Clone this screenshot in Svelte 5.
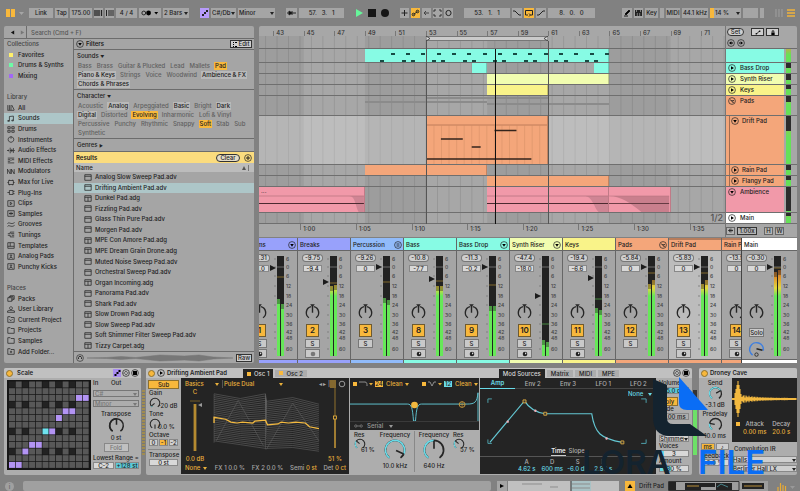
<script>
  let search = $state('');
  let activeTab = $state('Amp');

  const collections = [
    { name: 'Favorites', color: '#fff06a' },
    { name: 'Drums & Synths', color: '#6dfaa6' },
    { name: 'Mixing', color: '#a167f5' }
  ];

  // icon paths are drawn on a 10 x 8 grid
  const library = [
    { name: 'All', icon: 'M1 1V7M3 1V7M5 1V7M6 1L9 7M0.5 7.5H9' },
    { name: 'Sounds', icon: 'M3 6.5V1.5L8 1V6M1 6.5H3V7.5H1ZM6 6H8V7H6Z', active: true },
    { name: 'Drums', icon: 'M1 0.5H4V3H1ZM6 0.5H9V3H6ZM1 5H4V7.5H1ZM6 5H9V7.5H6Z' },
    { name: 'Instruments', icon: 'M5 0.5A3.5 3.5 0 1 1 4.9 0.5M5 0.5V3' },
    { name: 'Audio Effects', icon: 'M0 4H2M2 3V5M4 0.5V7.5M6 2V6M8 1V7M9 4H10M4 4H8' },
    { name: 'MIDI Effects', icon: 'M1 1H9M1 3H4L5 4L6 3H9M1 7H9M1 5H4' },
    { name: 'Modulators', icon: 'M0.5 7V1L4 7V1M5.5 7V1L9 7V1' },
    { name: 'Max for Live', icon: 'M2 1.5H8V6.5H2ZM0.5 4H2M8 4H9.5M3 0.5V1.5M7 0.5V1.5M3 6.5V7.5M7 6.5V7.5' },
    { name: 'Plug-Ins', icon: 'M3 1.5H7.5V6.5H3ZM0.5 4H3M7.5 2.5H9.5M7.5 5.5H9.5' },
    { name: 'Clips', icon: 'M1 0.5H9V7.5H1ZM4 2.5V5.5L6.5 4Z' },
    { name: 'Samples', icon: 'M1 0.5H9V7.5H1ZM2.5 4H7.5M3.5 3V5M5 2V6M6.5 3V5' },
    { name: 'Grooves', icon: 'M0.5 3C2.5 0 5 5 9.5 1.5M0.5 6.5C2.5 3.5 5 8.5 9.5 5' },
    { name: 'Tunings', icon: 'M4 1H9M1 3H4V1M1 5H4V7H9M5 3H9M6 5H9' },
    { name: 'Templates', icon: 'M1 0.5H9V7.5H1ZM1 5H9M4 0.5V5' },
    { name: 'Analog Pads', icon: 'M1 0.5H9V7.5H1ZM5 2A1 1 0 1 1 4.9 2M3 6.5C3 4.5 7 4.5 7 6.5' },
    { name: 'Punchy Kicks', icon: 'M1 0.5H9V7.5H1ZM5 2A1 1 0 1 1 4.9 2M3 6.5C3 4.5 7 4.5 7 6.5' }
  ];

  const places = [
    { name: 'Packs', icon: 'M1 3H6V7.5H1ZM2.5 3V1.7H7.5V6H6M4 1.7V0.5H9V5H7.5' },
    { name: 'User Library', icon: 'M5 0.5A1.8 1.8 0 1 1 4.9 0.5M0.5 7.5H9.5V6L6.5 5H3.5L0.5 6Z' },
    { name: 'Current Project', icon: 'M1 7.5V0.5H4L5 1.5H9V7.5ZM3 4L5 5.5L7 3.5' },
    { name: 'Projects', icon: 'M1 7.5V0.5H4L5 1.5H9V7.5Z' },
    { name: 'Samples', icon: 'M1 7.5V0.5H4L5 1.5H9V7.5Z' },
    { name: 'Add Folder...', icon: 'M1 7.5V0.5H4L5 1.5H9V7.5ZM5 3V6M3.5 4.5H6.5' }
  ];

  // tag state: '' = off, 'on' = available, 'hot' = selected
  const soundTags = [
    [['Bass'], ['Brass'], ['Guitar & Plucked'], ['Lead'], ['Mallets'], ['Pad', 'hot']],
    [['Piano & Keys', 'on'], ['Strings'], ['Voice'], ['Woodwind'], ['Ambience & FX', 'on']],
    [['Chords & Phrases', 'on']]
  ];
  const characterTags = [
    [['Acoustic'], ['Analog', 'on'], ['Arpeggiated'], ['Basic', 'on'], ['Bright'], ['Dark', 'on']],
    [['Digital', 'on'], ['Distorted'], ['Evolving', 'hot'], ['Inharmonic'], ['Lofi & Vinyl']],
    [['Percussive'], ['Punchy'], ['Rhythmic'], ['Snappy'], ['Soft', 'hot'], ['Stab'], ['Sub']],
    [['Synthetic']]
  ];

  const results = [
    'Analog Slow Sweep Pad.adv', 'Drifting Ambient Pad.adv', 'Dunkel Pad.adg', 'Fizzling Pad.adv',
    'Glass Thin Pure Pad.adv', 'Morgen Pad.adv', 'MPE Con Amore Pad.adg', 'MPE Dream Grain Drone.adg',
    'Muted Noise Sweep Pad.adv', 'Orchestral Sweep Pad.adv', 'Organ Incoming.adg', 'Panorama Pad.adv',
    'Shark Pad.adv', 'Slow Drown Pad.adg', 'Slow Sweep Pad.adv', 'Soft Shimmer Filter Sweep Pad.adv',
    'Tizzy Carpet.adg'
  ];

  // arrangement view range, in bars
  const firstBar = 42.07;
  const barCount = 30.49;
  const pos = (bar) => ((bar - firstBar) / barCount) * 100;
  const span = (bars) => (bars / barCount) * 100;

  const barLabels = Array.from({ length: 15 }, (_, i) => 43 + i * 2);
  const times = ['1:00', '1:05', '1:10', '1:15', '1:20', '1:25', '1:30', '1:35'];
  const shaded = [[42, 45], [49, 53], [57, 61], [65, 69]];
  const gridLines = Array.from({ length: 41 }, (_, i) => 42.5 + i * 0.75);

  const hits = [
    ...Array.from({ length: 15 }, (_, i) => [50.7 + i, 28]),
    ...Array.from({ length: 8 }, (_, i) => [50 + i * 2, 84]),
    ...Array.from({ length: 7 }, (_, i) => [51.4 + i * 2, 84])
  ].filter(([b]) => b < 65);

  const teal = '#87fbe4';
  const orange = '#f4a67a';
  const lime = '#f1fdb0';
  const yellow = '#f9f389';
  const pink = '#f199a9';

  const lanes = [
    { name: '', size: 'drums', color: teal, clips: [[49, 65]], meter: 0 },
    { name: 'Bass Drop', size: 'small', color: teal, clips: [[56, 57], [64, 65]], icon: 'play', meter: 50 },
    { name: 'Synth Riser', size: 'small', color: lime, clips: [[57, 65]], icon: 'play', meter: 60 },
    { name: 'Keys', size: 'small', color: yellow, clips: [[57, 61]], icon: 'play', meter: 40 },
    { name: 'Pads', size: 'bus', color: orange, clips: [], icon: 'group', meter: 30 },
    { name: 'Drift Pad', size: 'tall', color: orange, clips: [[53, 61]], icon: 'down', nested: true, meter: 32 },
    { name: 'Rain Pad', size: 'small', color: orange, clips: [[49, 57]], icon: 'play', nested: true, meter: 50 },
    { name: 'Flangy Pad', size: 'small', color: orange, clips: [[57, 65]], icon: 'play', nested: true, meter: 40 },
    { name: 'Ambience', size: 'audio', color: pink, clips: [[42.07, 49], [57, 65], [65, 69]], icon: 'down', meter: 95 },
    { name: 'Main', size: 'small', color: '#ffffff', clips: [], icon: 'play', meter: 30 }
  ];

  const scaleMarks = [
    ['6', 3], ['0', 11], ['6', 20], ['12', 30], ['18', 40], ['24', 49],
    ['30', 59], ['36', 68], ['42', 76], ['48', 82], ['60', 93]
  ];

  // levels and fader are measured from the top of the 100px meter
  const strips = [
    { name: 'Drums', color: '#98a1fb', icon: 'down', peak: '-9.31', vol: '-1.0', num: 1, fader: 12, levels: [43, 48], hold: 21, arm: 'note' },
    { name: 'Breaks', color: '#98a1fb', peak: '-9.75', vol: '-9.4', num: 2, fader: 26, levels: [30, 29], hold: 27, arm: 'dot' },
    { name: 'Percussion', color: '#91bbfa', icon: 'lines', peak: '-9.26', vol: '0', num: 3, fader: 11, levels: [42, 44], hold: 26 },
    { name: 'Bass', color: teal, peak: '-10.8', vol: '-7.7', num: 8, fader: 23, levels: [30, 30], hold: 25, arm: 'note' },
    { name: 'Bass Drop', color: teal, icon: 'down', peak: '-11.3', vol: '-0.2', num: 9, fader: 11, levels: [50, 50], hold: 29, arm: 'note' },
    { name: 'Synth Riser', color: lime, icon: 'down', peak: '-47.4', vol: '-18.0', num: 10, fader: 40, levels: [84, 86], hold: 68, arm: 'note' },
    { name: 'Keys', color: yellow, peak: '-19.4', vol: '-6.6', num: 11, fader: 22, levels: [52, 54], hold: 43, arm: 'note' },
    { name: 'Pads', color: orange, icon: 'group', peak: '-5.84', vol: '0', num: 12, fader: 11, levels: [28, 24], hold: 17 },
    { name: 'Drift Pad', color: orange, nested: true, selected: true, peak: '-5.83', vol: '0', num: 13, fader: 11, levels: [28, 24], hold: 17, arm: 'note' },
    { name: 'Rain Pad', color: orange, nested: true, peak: '-13.9', vol: '0', num: 14, fader: 11, levels: [38, 36], hold: 28, arm: 'note' }
  ];
  const main = { name: 'Main', color: '#ffffff', peak: '-0.30', vol: '0', fader: 11, levels: [16, 14], hold: 12, isMain: true };

  const cells = Array.from({ length: 13 * 12 }, (_, i) => ({ row: Math.floor(i / 12), col: i % 12 }));
  const violetCells = ['2-10', '2-11', '4-8', '4-9', '5-7', '7-6', '9-3', '9-4', '10-2', '12-0', '12-1'];
  function cellColor({ row, col }) {
    const key = `${row}-${col}`;
    if (key === '7-5') return '#6fe3ef';
    if (violetCells.includes(key)) return '#b394f4';
    return [0, 3, 7, 10].includes(row) && [0, 2, 5, 7, 9].includes(col) ? '#222' : '#585858';
  }

  const waves = Array.from({ length: 26 }, (_, i) => {
    const y = 3 + i * 2;
    const t = i / 25;
    return `M1 ${y}L26 ${y + 5 - t}L50 ${y + t * 8}L51 ${y + 8}L76 ${y + 4 + t * 3}L101 ${y + 11}`;
  });

  const burst = Array.from({ length: 65 }, (_, x) => {
    const h = x < 3 ? 1 : x < 9 ? 18 - Math.abs(6 - x) * 4 : 1 + 4 * Math.exp(-(x - 9) / 14) * (0.6 + 0.4 * Math.sin(x * 2.3));
    return `M${x} ${21 - h}V${21 + h}`;
  }).join('');

  function arc(r, from, to) {
    const p = (a) => [10 + r * Math.sin((a * Math.PI) / 180), 10 - r * Math.cos((a * Math.PI) / 180)];
    const [x1, y1] = p(from);
    const [x2, y2] = p(to);
    return `M${x1} ${y1}A${r} ${r} 0 ${to - from > 180 ? 1 : 0} 1 ${x2} ${y2}`;
  }
  function needle(angle, inner = 1, outer = 8) {
    const s = Math.sin((angle * Math.PI) / 180);
    const c = Math.cos((angle * Math.PI) / 180);
    return `M${10 + inner * s} ${10 - inner * c}L${10 + outer * s} ${10 - outer * c}`;
  }
</script>

{#snippet knob(size, angle, from = -145, color = '#262626')}
  <svg class="knob {size}" viewBox="0 0 20 20">
    <path d={arc(8, -145, 145)} stroke="#262626" />
    {#if angle > from}<path d={arc(8, from, angle)} stroke={color} />{/if}
    <path d={needle(angle)} stroke="#262626" />
  </svg>
{/snippet}

{#snippet circleIcon(kind)}
  <svg class="circle-icon" viewBox="0 0 8 8">
    <circle cx="4" cy="4" r="3.4" fill="none" stroke="#222" stroke-width="0.7" />
    {#if kind === 'play'}<path d="M3 2.2V5.8L6 4Z" />
    {:else if kind === 'down'}<path d="M2.2 3H5.8L4 5.8Z" />
    {:else if kind === 'plus'}<path d="M4 2V6M2 4H6" stroke="#222" />
    {:else if kind === 'left'}<path d="M2 4L4.4 2.2V5.8ZM4 3.6H6V4.4H4Z" />
    {:else if kind === 'right'}<path d="M6 4L3.6 2.2V5.8ZM2 3.6H4V4.4H2Z" />
    {:else if kind === 'lines'}<path d="M2.5 2.8H5.5M2.5 4H5.5M2.5 5.2H5.5" stroke="#222" stroke-width="0.6" />
    {:else if kind === 'group'}<path d="M2 2.8L4 3.8V5L6 5.4M4 3.8L6 3.4" fill="none" stroke="#222" stroke-width="0.8" />
    {:else if kind === 'swap'}<path d="M2 5C2 2.5 4 2 5 3M6 3C6 5.5 4 6 3 5" fill="none" stroke="#222" stroke-width="0.7" />
    {:else if kind === 'save'}<path d="M2 2H6V6H2Z" />
    {/if}
  </svg>
{/snippet}

{#snippet rowIcon(d)}
  <svg class="row-icon" viewBox="0 0 10 8"><path {d} /></svg>
{/snippet}

{#snippet dropdown(label, value, tone = '')}
  <span class="dropdown {tone}">
    <select aria-label={label}><option>{value}</option></select>
  </span>
{/snippet}

{#snippet tags(rows)}
  {#each rows as row}
    <div class="tag-row">
      {#each row as [name, state]}
        <button class="tag {state ?? ''}">{name}</button>
      {/each}
    </div>
  {/each}
{/snippet}

{#snippet strip(s)}
  <section class="strip" class:selected={s.selected} class:main={s.isMain}>
    <header class="strip-name" class:nested={s.nested} style="background: {s.color}">
      <span>{s.name}</span>
      {#if s.icon}{@render circleIcon(s.icon)}{/if}
    </header>
    <div class="strip-body">
      <div class="strip-controls">
        <button class="peak">{s.peak}</button>
        <input class="box" aria-label="{s.name} volume" value={s.vol} />
        <div class="pan">
          <svg class="knob pan-knob" viewBox="0 0 20 22">
            <path d={arc(8, -145, -12)} stroke="#262626" />
            <path d={arc(8, 12, 145)} stroke="#262626" />
            <path d="M10 10V1" stroke="#262626" />
            <path d="M7 -1H13L10 3Z" fill="#262626" />
          </svg>
        </div>
        {#if s.isMain}
          <button class="small-btn solo">Solo</button>
          <svg class="knob cue" viewBox="0 0 20 20">
            <path d={arc(8, -145, 100)} stroke="#3e7fe0" />
            <path d="M10 9L17 11" stroke="#262626" />
            <circle cx="10" cy="16" r="2" fill="none" stroke="#262626" stroke-width="1" />
          </svg>
        {:else}
          <button class="number">{s.num}</button>
          <button class="small-btn">S</button>
          {#if s.arm}
            <button class="small-btn" aria-label="Arm {s.name}">
              <svg viewBox="0 0 6 6">
                <circle cx="3" cy="3" r="2.3" fill={s.arm === 'note' ? '#222' : '#777'} />
                {#if s.arm === 'note'}<path d="M3 1.2L4.6 2.6L3 3.4Z" fill="#ddd" />{/if}
              </svg>
            </button>
          {/if}
        {/if}
      </div>
      <svg class="meter" viewBox="0 0 26 104">
        <defs>
          <linearGradient id="level" gradientUnits="userSpaceOnUse" x1="0" y1="2" x2="0" y2="102">
            <stop offset="0.1" stop-color="#b0501c" />
            <stop offset="0.22" stop-color="#e0962c" />
            <stop offset="0.32" stop-color="#e3d83f" />
            <stop offset="0.4" stop-color="#66e858" />
          </linearGradient>
        </defs>
        {#each scaleMarks as [label, y]}
          <path d="M5 {y + 2}H7" stroke="#777" stroke-width="0.8" />
          <text x="17" y={y + 4}>{label}</text>
        {/each}
        <rect x="8" y="2" width="7" height="100" fill="#222" />
        <path d="M8 13H15" stroke="#8a8a8a" stroke-width="0.7" />
        <path d="M8 {s.hold + 2}H15" stroke={s.hold > 40 ? '#56b84d' : '#a98732'} stroke-width="0.7" />
        {#each s.levels as level, i}
          <rect x={8 + i * 4} y={level + 2} width="3" height={100 - level} fill="url(#level)" />
          <rect x={8 + i * 4} y={level + 2} width="3" height="5" fill="#222" opacity="0.4" />
        {/each}
        <path d="M1 {s.fader - 1}V{s.fader + 5}L7 {s.fader + 2}Z" fill="#1c1c1c" />
      </svg>
    </div>
    <div class="strip-foot" style="background: {s.color}"></div>
  </section>
{/snippet}

<div class="app">
  <header class="topbar">
    <div class="group g-tempo">
      <button class="plain" aria-label="Toggle browser">
        <svg viewBox="0 0 9 8"><path d="M0 0H4V8H0ZM5 0H9V8H5Z" fill="#f8b83c" /></svg>
      </button>
      <button class="plain" aria-label="View menu">
        <svg viewBox="0 0 10 8"><path d="M2 3H7L4.500 6Z" fill="#a5a5a5" /></svg>
      </button>
      <button>Link</button>
      <button>Tap</button>
      <input aria-label="Tempo" value="175.00" />
      <button aria-label="Nudge down"><svg viewBox="0 0 9 8"><path d="M1 1V7M3 1V7M5 1V7M7.500 1V7" stroke="#222" stroke-width="1.300" /></svg></button>
      <button aria-label="Nudge up"><svg viewBox="0 0 9 8"><path d="M1.500 1V7M4 1V7M6 1V7M8 1V7" stroke="#222" /></svg></button>
      <input aria-label="Time signature" value="4 / 4" />
      <button aria-label="Metronome">
        <svg viewBox="0 0 23 8">
          <circle cx="5" cy="4" r="2" fill="none" stroke="#222" /><circle cx="10" cy="4" r="2.500" />
          <path d="M16 3H20L18 5.500Z" />
        </svg>
      </button>
      {@render dropdown('Quantization', '2 Bars')}
    </div>
    <div class="group g-scale">
      <button class="violet" aria-label="Scale mode">
        <svg viewBox="0 0 9 8"><path d="M2 5H4V7H2ZM4 3H6V5H4ZM6 1H8V3H6Z" fill="#222" /></svg>
      </button>
      {@render dropdown('Root note', 'C#/Db')}
      {@render dropdown('Scale name', 'Minor')}
    </div>
    <div class="group g-position">
      <button aria-label="Follow"><svg viewBox="0 0 11 8"><path d="M1 4H10" stroke="#222" /><path d="M3 2V6L6 4ZM6 2V6" stroke="#222" /></svg></button>
      <input aria-label="Position" class="spaced" value="57.&nbsp;&nbsp; 3.&nbsp;&nbsp; 1" />
    </div>
    <div class="group g-transport">
      <button class="plain" aria-label="Play"><svg viewBox="0 0 8 8"><path d="M1 0V8L8 4Z" fill="#66f59a" /></svg></button>
      <button class="plain" aria-label="Stop"><svg viewBox="0 0 8 8"><path d="M0 0H8V8H0Z" fill="#161616" /></svg></button>
      <button class="plain" aria-label="Record"><svg viewBox="0 0 8 8"><circle cx="4" cy="4" r="4" fill="#161616" /></svg></button>
    </div>
    <div class="group g-record">
      <button aria-label="Overdub"><svg viewBox="0 0 9 8"><path d="M4.500 1V7M1.500 4H7.500" stroke="#222" /></svg></button>
      <button class="amber" aria-label="Automation"><svg viewBox="0 0 9 8"><path d="M2.500 5.500L6.500 2.500" stroke="#222" /><circle cx="2.500" cy="5.500" r="1.300" fill="none" stroke="#222" /><circle cx="6.500" cy="2.500" r="1.300" fill="none" stroke="#222" /></svg></button>
      <button aria-label="Re-enable automation"><svg viewBox="0 0 9 8"><path d="M2 4H7M4 2L2 4L4 6" fill="none" stroke="#444" /></svg></button>
      <button aria-label="Capture"><svg viewBox="0 0 9 8"><path d="M1 3V1H3M6 1H8V3M8 5V7H6M3 7H1V5" fill="none" stroke="#333" /></svg></button>
      <button aria-label="Session record"><svg viewBox="0 0 9 8"><circle cx="4.500" cy="4" r="2.600" fill="none" stroke="#222" /></svg></button>
    </div>
    <div class="group g-loop">
      <input aria-label="Loop start" class="spaced" value="53.&nbsp;&nbsp; 1.&nbsp;&nbsp; 1" />
      <button aria-label="Punch in"><svg viewBox="0 0 10 8"><path d="M1 2H3L7 6H9" fill="none" stroke="#222" /></svg></button>
      <button class="amber" aria-label="Loop"><svg viewBox="0 0 10 8"><path d="M4 6H1.500V1.500H8.500V6H6.500M5 4.500L6.500 6L5 7.500" fill="none" stroke="#222" /></svg></button>
      <button aria-label="Punch out"><svg viewBox="0 0 10 8"><path d="M1 6H3L7 2H9" fill="none" stroke="#222" /></svg></button>
      <input aria-label="Loop length" class="spaced" value="8.&nbsp;&nbsp; 0.&nbsp;&nbsp; 0" />
    </div>
    <div class="group g-midi">
      <button aria-label="Draw mode"><svg viewBox="0 0 10 8"><path d="M3 5L7 1L8 2L4 6Z M2 7H6" stroke="#161616" /></svg></button>
      <button aria-label="Computer keyboard"><svg viewBox="0 0 9 8"><path d="M1 1H8V7H1Z" fill="#222" /><path d="M3.300 4V7M5.700 4V7M2.500 1V3M6.500 1V3" stroke="#a5a5a5" stroke-width="0.700" /></svg></button>
      <button>Key</button>
      <span class="led"></span>
      <button>MIDI</button>
      <button>44.1 kHz</button>
      <span class="cpu">{@render dropdown('CPU load', '14 %')}</span>
      <span class="led"></span>
      <span class="led"></span>
    </div>
    <div class="group g-view">
      <button class="plain" aria-label="Session view"><svg viewBox="0 0 8 8"><path d="M1 0V8M4 0V8M7 0V8" stroke="#a0a0a0" /></svg></button>
      <button class="plain" aria-label="Arrangement view"><svg viewBox="0 0 8 8"><path d="M0 1H8M0 4H8M0 7H8" stroke="#f0b23c" stroke-width="1.400" /></svg></button>
    </div>
  </header>

  <main class="workspace">
    <aside class="browser">
      <div class="search">
        <button class="plain" aria-label="Back"><svg viewBox="0 0 6 6"><path d="M5 0.500V5.500L1 3Z" fill="#111" /></svg></button>
        <button class="plain" aria-label="Forward"><svg viewBox="0 0 6 6"><path d="M1 0.500V5.500L5 3Z" fill="#777" /></svg></button>
        <input bind:value={search} aria-label="Search" placeholder="Search (Cmd + F)" />
      </div>
      <div class="browser-body">
        <nav class="places">
          <h2>Collections</h2>
          {#each collections as c}
            <a href="#collection"><i class="swatch" style="background: {c.color}"></i>{c.name}</a>
          {/each}
          <h2 class="blank"></h2>
          <h2>Library</h2>
          {#each library as item}
            <a href="#library" class:active={item.active}>{@render rowIcon(item.icon)}{item.name}</a>
          {/each}
          <h2 class="blank"></h2>
          <h2>Places</h2>
          {#each places as item}
            <a href="#places">{@render rowIcon(item.icon)}{item.name}</a>
          {/each}
        </nav>
        <div class="content">
          <div class="filter-head">
            {@render circleIcon('down')}
            <b>Filters</b>
            <button class="outline"><svg viewBox="0 0 4 5"><path d="M0 0H1V1H0ZM0 2H1V3H0ZM0 4H1V5H0ZM2 0H4V1H2ZM2 4H4V5H2Z" /></svg>Edit</button>
          </div>
          <div class="filter">
            <h3>Sounds <span>▼</span></h3>
            {@render tags(soundTags)}
          </div>
          <div class="filter">
            <h3>Character <span>▼</span></h3>
            {@render tags(characterTags)}
          </div>
          <div class="filter">
            <h3>Genres <span>▶</span></h3>
          </div>
          <div class="results-head">
            <b>Results</b>
            <button class="pill">Clear</button>
            {@render circleIcon('plus')}
          </div>
          <div class="name-head"><span>Name</span><svg viewBox="0 0 8 6"><path d="M0 5H4L2 1Z" fill="#555" /><path d="M6.500 0V6" stroke="#777" /></svg></div>
          <ul class="results">
            {#each results as file, i}
              <li class:active={i === 1}>
                {@render rowIcon(file.endsWith('adg') ? 'M1 0.5H9V7.5H1ZM1 2.500H9M5 2.500V7.500' : 'M1 0.5H9V7.5H1ZM1 2.500H9')}
                {file}
              </li>
            {/each}
          </ul>
          <div class="preview">
            <svg class="circle-icon" viewBox="0 0 8 8"><circle cx="4" cy="4" r="3.400" fill="none" stroke="#333" stroke-width="0.700" /><path d="M2.500 5V3.500C2.500 2 5.500 2 5.500 3.500V5" fill="none" stroke="#333" /></svg>
            <svg class="preview-wave" viewBox="0 0 150 10" preserveAspectRatio="none"><path d="M0 5L20 4.500L35 3.500L50 4.500L75 2L100 3L115 2L130 4L150 5L130 6L115 8L100 7L75 8L50 5.500L35 6.500L20 5.500Z" fill="#777" stroke="#777" stroke-width="0.500" /></svg>
            <button class="outline">Raw</button>
          </div>
        </div>
      </div>
    </aside>

    <div class="stage">
      <section class="arrangement">
        <div class="timeline">
          <svg class="grid-shade" viewBox="{firstBar} 0 {barCount} 1" preserveAspectRatio="none">
            {#each shaded as [a, b]}<rect x={a} y="0" width={b - a} height="1" fill="#000" opacity="0.06" />{/each}
            {#each gridLines as x}<path d="M{x} 0V1" stroke="#000" stroke-opacity="0.09" vector-effect="non-scaling-stroke" />{/each}
          </svg>
          <div class="ruler">
            {#each barLabels as bar}<span class="tick" style="left: {pos(bar)}%">{bar}</span>{/each}
            <div class="loop" style="left: {pos(53)}%; width: {span(8)}%">
              <svg viewBox="0 0 4 5"><path d="M0 0L4 2.500L0 5Z" /></svg>
              <svg viewBox="0 0 4 5"><path d="M4 0L0 2.500L4 5Z" /></svg>
            </div>
          </div>
          {#each lanes as lane}
            <div class="lane {lane.size}">
              {#if lane.size === 'bus'}
                <i class="ghost" style="left: {pos(49)}%; width: {span(8)}%; top: 25%"></i>
                <i class="ghost" style="left: {pos(53)}%; width: {span(8)}%; top: 5%"></i>
                <i class="ghost" style="left: {pos(57)}%; width: {span(8)}%; top: 38%"></i>
              {/if}
              {#each lane.clips as [a, b]}
                <div class="clip" style="left: {pos(a)}%; width: {span(b - a)}%; background: {lane.color}">
                  {#if lane.size === 'tall'}
                    <svg viewBox="0 0 122 48" preserveAspectRatio="none">
                      <path d="M0 9H122" stroke="#a86c4c" stroke-width="0.700" />
                      {#each Array(15) as _, i}<path d="M{8 + i * 7.6} 9V48" stroke="#d28e66" stroke-width="0.500" />{/each}
                      <path d="M15 23H37M46 31H55M69 14.500H91M0 43H106" stroke="#33241c" stroke-width="1.600" />
                    </svg>
                  {:else if lane.size === 'audio'}
                    <svg viewBox="0 0 100 25" preserveAspectRatio="none">
                      {#if a === 65}<path d="M0 9C20 9 38 17 54 25H100V9Z" fill="#c97f8d" />
                      {:else if a === 57}<path d="M80 9H100V25H92C88 20 87 9 80 9Z" fill="#cf8594" />
                      {:else}<path d="M86 9H100V25H95C92 20 92 9 86 9Z" fill="#cf8594" />{/if}
                      <path d="M0 9H100" stroke="#b57380" stroke-width="0.700" />
                      <path d="M0 16.500H100" stroke="#4c2a30" />
                    </svg>
                    {#if a < 43}<span class="clip-name">...</span>{/if}
                  {/if}
                </div>
              {/each}
              {#if lane.size === 'drums'}
                {#each hits as [b, y]}<i class="hit" style="left: {pos(b)}%; top: {y}%"></i>{/each}
              {/if}
              {#if lane.name === 'Main'}<span class="zoom-ratio">1/2</span>{/if}
            </div>
          {/each}
          <i class="marker" style="left: {pos(53)}%"></i>
          <i class="marker" style="left: {pos(61)}%"></i>
          <i class="marker playhead" style="left: {pos(57.52)}%"></i>
          <div class="time-ruler">
            {#each times as t, i}<span class="tick" style="left: {pos(44.77 + i * 3.64)}%">{t}</span>{/each}
          </div>
        </div>
        <div class="track-heads">
          <div class="head-tools">
            <button class="pill">Set</button>
            <span class="tool-pair">
              <button class="outline" aria-label="Automation mode"><svg viewBox="0 0 8 6"><path d="M2 5L6 1" stroke="#111" /><circle cx="2" cy="4.500" r="1" /><circle cx="6" cy="1.500" r="1" /></svg></button>
              <button class="outline" aria-label="Lock envelopes"><svg viewBox="0 0 8 6"><path d="M2 3H6V6H2Z" /><path d="M3 3V1H5V3" fill="none" stroke="#111" /></svg></button>
            </span>
            <span class="locators">{@render circleIcon('left')}{@render circleIcon('right')}</span>
          </div>
          {#each lanes as lane}
            <div class="head-row {lane.size}">
              <div class="head" class:nested={lane.nested} style="background: {lane.color}">
                {#if lane.icon}{@render circleIcon(lane.icon)}{/if}
                <span>{lane.name}</span>
              </div>
              <div class="head-meter"><i style="height: {lane.meter}%"></i></div>
            </div>
          {/each}
          <div class="head-foot">
            <button class="outline" aria-label="Fit waveform"><svg viewBox="0 0 8 6"><path d="M1 3H7M3 1V5M4.500 0.500V5.500M6 2V4" stroke="#111" stroke-width="0.800" /></svg></button>
            <button class="outline rate">1.00x</button>
            <button class="outline push">H</button>
            <button class="outline">W</button>
          </div>
        </div>
      </section>

      <section class="mixer">
        <div class="strips">
          {#each strips as s}{@render strip(s)}{/each}
        </div>
        {@render strip(main)}
      </section>
    </div>
  </main>

  <section class="devices">
    <article class="device scale-device">
      <header>
        <i class="power"></i><b>Scale</b>
        <span class="device-icons">
          <svg class="circle-icon" viewBox="0 0 8 8"><path d="M0 0H8V8H0Z" fill="#a98cf0" /><path d="M1.500 5H3.500V7H1.500ZM3.500 3H5.500V5H3.500ZM5.500 1H7.500V3H5.500Z" /></svg>
          {@render circleIcon('swap')}{@render circleIcon('save')}
        </span>
      </header>
      <div class="device-body">
        <svg class="scale-grid" viewBox="0 0 84 90">
          <path d="M0 0H84V90H0Z" fill="#161616" />
          {#each cells as c}
            <rect x={2 + c.col * 6.7} y={1.5 + c.row * 6.7} width="6" height="6" fill={cellColor(c)} />
          {/each}
        </svg>
        <div class="scale-params">
          <div class="pair"><span>In</span><span>Out</span></div>
          {@render dropdown('Base', 'C#', 'ghosted')}
          {@render dropdown('Scale', 'Minor', 'ghosted')}
          <span class="mid">Transpose</span>
          {@render knob('k-mid', 0)}
          <span class="mid">0 st</span>
          <button class="fold">Fold</button>
          <div class="pair ends"><label for="lowest">Lowest</label><label for="range">Range =</label></div>
          <div class="pair ends"><input id="lowest" class="box" value="C-2" /><input id="range" class="box cyan" value="+128 st" /></div>
        </div>
      </div>
    </article>

    <i class="chain-meter"></i>

    <article class="device drift">
      <header>
        <i class="power"></i>{@render circleIcon('play')}<b>Drifting Ambient Pad</b>
        <button class="tab dark osc-tab"><i></i>Osc 1</button>
        <button class="tab"><i></i>Osc 2</button>
        <button class="tab dark mod-tab">Mod Sources</button>
        <button class="tab">Matrix</button>
        <button class="tab">MIDI</button>
        <button class="tab">MPE</button>
        <span class="device-icons">{@render circleIcon('swap')}{@render circleIcon('save')}</span>
      </header>
      <div class="device-body">
        <div class="sub-col">
          <button class="amber">Sub</button>
          <span>Gain</span>
          <div class="knob-line">{@render knob('k-small', -130, -145, '#69dbe8')}<span>-20 dB</span></div>
          <span>Tone</span>
          <div class="knob-line">{@render knob('k-small', -180)}<span>0.0 %</span></div>
          <span>Octave</span>
          <div class="octaves"><button>0</button><button class="amber">-1</button><button>-2</button></div>
          <label class="ruled" for="sub-transpose">Transpose</label>
          <input id="sub-transpose" class="box" value="0 st" />
        </div>
        <div class="osc">
          <div class="osc-row">
            {@render dropdown('Category', 'Basics', 'gold')}
            {@render dropdown('Wavetable', 'Pulse Dual', 'gold ruled-left')}
            <span class="arrows">◂ ▸ |</span>
            <svg class="view-icons" viewBox="0 0 16 8"><path d="M0 1H6M0 3H6M0 5H6M0 7H6" stroke="#e5ae3c" /><circle cx="12" cy="4" r="2.800" fill="none" stroke="#999" /></svg>
          </div>
          <div class="osc-main">
            <div class="osc-gain">
              <span class="gold-text">C</span>
              <svg viewBox="0 0 16 52"><path d="M3 1H13" stroke="#8a6c2c" stroke-width="0.800" /><path d="M8 4V51" stroke="#e5ae3c" stroke-width="2.600" /><path d="M8 4V51" stroke="#6e561f" stroke-width="0.800" /><path d="M15 3V7L11 5Z" fill="#999" /></svg>
              <span class="gold-text">0.0 dB</span>
            </div>
            <svg class="wavetable" viewBox="0 0 102 68" preserveAspectRatio="none">
              {#each waves as d}<path {d} fill="none" stroke="#858585" stroke-width="0.400" />{/each}
              <path d="M1 3V55M50 3V62M51 62L76 13L101 53M3 53L24 10L48 58" fill="none" stroke="#666" stroke-width="0.500" />
              <path d="M1 34V28L12 30L17 33L23 34L28 33L38 34L40 32L50 31L52 36L62 35L65 33L72 34L79 33L88 34L92 38L101 40" fill="none" stroke="#f3b93f" stroke-width="1.300" />
            </svg>
            <div class="osc-pos">
              <svg viewBox="0 0 10 60"><path d="M5 0V60" stroke="#80662c" stroke-width="1.200" /><path d="M5 30V60" stroke="#e5ae3c" /><rect x="3.500" y="28" width="3" height="3" fill="#242424" stroke="#f3b93f" stroke-width="0.800" /></svg>
              <span class="gold-text">51 %</span>
            </div>
          </div>
          <div class="osc-foot">
            {@render dropdown('Effect', 'None', 'gold')}
            <span>FX 1 0.0 %</span><span>FX 2 0.0 %</span>
            <span>Semi <em>0 st</em></span><span>Det <em>0 ct</em></span>
          </div>
        </div>
        <div class="filters">
          <div class="filter-display">
            <div class="filter-row">
              <i class="on-square"></i>
              <svg class="shape" viewBox="0 0 14 6"><path d="M0 1H6C8 1 8 3 8 5" fill="none" stroke="#aaa" stroke-width="0.800" /><path d="M10 2H14L12 4.500Z" fill="#e5ae3c" /></svg>
              <span class="chip">24</span>{@render dropdown('Filter 1 circuit', 'Clean', 'gold')}
              <i class="on-square second"></i>
              <svg class="shape" viewBox="0 0 14 6"><path d="M0 1H2L4 5L6 1H8" fill="none" stroke="#aaa" stroke-width="0.800" /><path d="M10 2H14L12 4.500Z" fill="#e5ae3c" /></svg>
              <span class="chip blue">12</span>{@render dropdown('Filter 2 circuit', 'Clean', 'gold')}
            </div>
            <svg class="response" viewBox="0 0 130 34" preserveAspectRatio="none">
              <path d="M0 16H58C62 16 63 20 64 34H66C67 20 68 16 72 16H118C126 16 128 14 129 4V34" fill="none" stroke="#5fc3cf" />
              <circle cx="65" cy="17" r="3.400" fill="#f3b93f" />
              <circle cx="113" cy="16.500" r="3" fill="none" stroke="#c8973a" /><path d="M113 13V20M110 16.500H116" stroke="#c8973a" stroke-width="0.600" />
            </svg>
            <div class="serial"><svg class="link-icon" viewBox="0 0 10 6"><circle cx="2" cy="3" r="1.300" /><circle cx="8" cy="3" r="1.300" /><path d="M3.500 3H6.500" /></svg>{@render dropdown('Routing', 'Serial', 'light')}</div>
          </div>
          <div class="filter-knobs">
            <div class="fk side"><span>Res</span>{@render knob('k-small', -50, -145, '#69dbe8')}<span class="low">61 %</span></div>
            <div class="fk"><span>Frequency</span>{@render knob('k-big', 115, -145, '#69dbe8')}<span>10.0 kHz</span></div>
            <div class="fk split"><span>Frequency</span>{@render knob('k-big', 0, -145, '#69dbe8')}<span>640 Hz</span></div>
            <div class="fk side"><span>Res</span>{@render knob('k-small', -50, -145, '#69dbe8')}<span class="low">57 %</span></div>
          </div>
        </div>
        <div class="mod">
          <div class="mod-tabs">
            {#each ['Amp', 'Env 2', 'Env 3', 'LFO 1', 'LFO 2'] as name}
              <button class:current={activeTab === name} onclick={() => (activeTab = name)}>{name}</button>
            {/each}
          </div>
          <div class="mod-graph">
            <div class="mod-none">{@render dropdown('Loop mode', 'None', 'aqua')}</div>
            <svg viewBox="0 0 178 56" preserveAspectRatio="none">
              <path d="M8 11V7H12M8 48V52H12M163 7H168V11M163 52H168V48" fill="none" stroke="#4ea0aa" />
              <path d="M10 51L45 9C50 17 58 21 66 22H113C116 42 122 47 144 51" fill="none" stroke="#63c6d2" stroke-width="1.200" />
              <path d="M43.500 8H46.500V11H43.500ZM64.500 20.500H67.500V23.500H64.500ZM142.500 49.500H145.500V52.500H142.500Z" fill="#333" stroke="#e0ad40" stroke-width="0.900" />
              <circle cx="28" cy="30" r="1.200" fill="#f0aeb9" /><circle cx="56" cy="19" r="1.200" fill="#f0aeb9" /><circle cx="128" cy="47" r="1.200" fill="#f0aeb9" />
            </svg>
            <div class="mod-mode"><b>Time</b><span>Slope</span></div>
          </div>
          <div class="adsr">
            <span>A<em>4.62 s</em></span><span>D<em>600 ms</em></span><span>S<em>-6.0 dB</em></span><span>R<em>2.90 s</em></span>
          </div>
        </div>
        <div class="voice-col">
          <label for="volume">Volume</label><input id="volume" class="box cyan" value="-5.0 dB" />
          <button class="amber">Poly</button>
          <label for="glide">Glide</label><input id="glide" class="box dim" value="0.00 ms" />
          <span class="grow"></span>
          {@render dropdown('Unison', 'Shimmer', 'boxed')}
          <label for="voices">Voices</label><input id="voices" class="box voices" value="3" />
          <label for="amount">Amount</label><input id="amount" class="box amount" value="30 %" />
        </div>
      </div>
    </article>

    <i class="chain-meter green"></i>

    <article class="device cave">
      <header><i class="power"></i><b>Droney Cave</b></header>
      <div class="device-body">
        <div class="send-col">
          <span>Send</span>{@render knob('k-send', 60, -145, '#69dbe8')}<span>-3.1 dB</span>
          <span>Predelay</span>{@render knob('k-send', -80, -145, '#69dbe8')}<span>10.0 ms</span>
          <div class="octaves"><button class="amber">ms</button><button>♪</button></div>
          <label for="feedback">Feedback</label><input id="feedback" class="box" value="0.0 %" />
        </div>
        <div class="ir-col">
          <div class="ir-display">
            <svg viewBox="0 0 65 42" preserveAspectRatio="none"><path d={burst} stroke="#f3b93f" stroke-width="1.100" /></svg>
            <div class="ir-row"><i class="on-square"></i><span>Attack</span><span>Decay</span></div>
            <div class="ir-row"><i></i><em>0.00 ms</em><em>20.0 s</em></div>
          </div>
          <span class="ir-title">Convolution IR</span>
          {@render dropdown('IR category', 'Halls', 'boxed')}
          {@render dropdown('IR file', 'Berliner Hall LX', 'boxed')}
        </div>
      </div>
    </article>

    <div class="watermark">
      <svg viewBox="0 0 56 60">
        <path d="M0 2L14 8V41Q14 47 20 47H37L54 59H17Q0 59 0 40Z" fill="#14232f" />
        <path d="M26 0L55 33H34Q26 33 26 26Z" fill="#0a6df5" />
      </svg>
      <div class="wordmark"><span>LORA</span><span class="blue">FILE</span></div>
    </div>
  </section>

  <footer class="statusbar">
    <span class="info">i</span>
    <div class="status-box"></div>
    <button class="mini" aria-label="Show clip view"><svg viewBox="0 0 8 8"><path d="M2 2V6L6 4Z" /></svg></button>
    <svg class="overview" viewBox="0 0 111 10" preserveAspectRatio="none">
      <path d="M0 0H111V10H0Z" fill="#c0c0c0" /><path d="M63 0H83V10H63Z" fill="#a9c2c5" />
      <path d="M14 3H34M42 6H50M64 3H82M64 7H82" stroke="#8d8d8d" /><path d="M63 0V10" stroke="#333" />
    </svg>
    <button class="mini amber" aria-label="Show device view"><svg viewBox="0 0 8 8"><path d="M1.500 6H6.500L4 2Z" /></svg></button>
    <b>Drift Pad</b>
    <svg class="thumbs" viewBox="0 0 100 10" preserveAspectRatio="none">
      <path d="M0 0H100V10H0Z" fill="#9d9d9d" /><path d="M1 1H8V9H1ZM17 2H33V9H17ZM33 2H47V6H33ZM48 2H64V9H48ZM74 2H96V8H74Z" fill="#232323" />
      <path d="M19 5H31M76 5H94" stroke="#b98f3a" /><path d="M49 6L53 3L60 6" fill="none" stroke="#5fc3cf" stroke-width="0.600" /><path d="M0.500 0.500H71V9.500H0.500Z" fill="none" stroke="#333" />
    </svg>
    <svg class="bars" viewBox="0 0 18 9"><path d="M1 5V9M3.500 1V9M6 3V9M8.500 4V9" stroke="#e9ab35" stroke-width="1.200" /><path d="M13 4H18L15.500 7Z" fill="#999" /></svg>
  </footer>
</div>

<style>
  :global(body) {
    margin: 0;
    background: #818181;
  }

  .app {
    min-height: 100vh;
    box-sizing: border-box;
    padding-bottom: 3px;
    display: grid;
    grid-template-columns: minmax(0, 1fr);
    grid-template-rows: auto 1fr auto auto;
    font-family: Inter, 'Liberation Sans', sans-serif;
    font-size: 6px;
    font-weight: 500;
    line-height: 8px;
    color: #222;
    white-space: nowrap;
    overflow: hidden;
  }

  .app * {
    box-sizing: border-box;
  }

  button,
  input,
  select {
    font: inherit;
    color: inherit;
    border: 0;
    border-radius: 0;
    margin: 0;
    padding: 0;
    min-width: 0;
    background: none;
    text-align: center;
    appearance: none;
    outline: none;
  }

  button {
    cursor: pointer;
  }

  svg {
    display: block;
  }

  i,
  em {
    font-style: normal;
  }

  b {
    font-weight: 600;
  }

  h2,
  h3,
  ul {
    margin: 0;
    padding: 0;
    font-size: 6px;
    font-weight: 500;
    list-style: none;
  }

  .amber,
  .group .amber {
    background: #f8b83c;
  }

  .circle-icon {
    width: 8px;
    height: 8px;
    flex: none;
  }

  .dropdown {
    position: relative;
    display: flex;
    min-width: 0;
  }

  .dropdown select {
    width: 100%;
    padding: 0 5px 0 1px;
    text-align: left;
  }

  .dropdown::after {
    content: '';
    position: absolute;
    right: 1px;
    top: 50%;
    margin-top: -1px;
    border: 2px solid transparent;
    border-top: 3px solid currentColor;
    border-bottom: 0;
    pointer-events: none;
  }

  .outline,
  .pill {
    height: 8px;
    line-height: 6px;
    border: 1px solid #333;
    background: #cfcfcf;
    display: flex;
    align-items: center;
    justify-content: center;
    gap: 2px;
    padding: 0 1px;
  }

  .outline svg {
    width: 8px;
    height: 5px;
  }

  .pill {
    border-radius: 4px;
  }

  /* top bar */
  .topbar {
    display: flex;
    gap: 11px;
    padding: 8px 5px 8px 6px;
  }

  .group {
    display: grid;
    grid-auto-flow: column;
    gap: 2px;
    height: 10px;
  }

  .group button,
  .group input,
  .group .dropdown,
  .group .led,
  .cpu {
    background: #a5a5a5;
  }

  .group .plain {
    background: none;
  }

  .group .violet {
    background: #b79bfb;
  }

  .group .amber {
    background: #f8b83c;
  }

  .group svg {
    width: 100%;
    height: 8px;
  }

  .spaced {
    white-space: pre;
  }

  .g-tempo { grid-template-columns: 9px 10px 24px 13px 22px 9px 9px 21px 22px 26px; }
  .g-scale { grid-template-columns: 9px 25px 37px; }
  .g-position { grid-template-columns: 11px 45px; }
  .g-transport { grid-template-columns: 8px 8px 8px; gap: 5px; align-items: center; }
  .g-record { grid-template-columns: repeat(5, 9px); }
  .g-loop { grid-template-columns: 46px 10px 10px 10px 47px; }
  .g-midi { grid-template-columns: 10px 9px 13px 4px 14px 26px 31px 15px 4px; margin-left: auto; }
  .g-view { grid-template-columns: 8px 8px; gap: 4px; align-items: center; }

  .cpu {
    border-left: 4px solid #f8b83c;
    display: grid;
  }

  /* workspace */
  .workspace {
    display: flex;
    gap: 5px;
    padding: 0 3px 0 4px;
  }

  .browser {
    width: 250px;
    flex: none;
    display: flex;
    flex-direction: column;
    background: #a5a5a5;
    border-radius: 2px;
  }

  .search {
    height: 13px;
    display: flex;
    align-items: center;
    border-bottom: 1px solid #6c6c6c;
    padding-left: 3px;
  }

  .search button {
    width: 10px;
    display: flex;
    justify-content: center;
  }

  .search button svg {
    width: 5px;
    height: 5px;
  }

  .search input {
    flex: 1;
    height: 12px;
    margin-left: -1px;
    padding-left: 4px;
    border-left: 1px solid #6c6c6c;
    text-align: left;
  }

  .search input::placeholder {
    color: #555;
    opacity: 1;
  }

  .browser-body {
    flex: 1;
    display: flex;
  }

  .places {
    width: 70px;
    border-right: 1px solid #6c6c6c;
    padding-bottom: 6px;
    display: flex;
    flex-direction: column;
  }

  .places h2,
  .places a {
    flex: 1;
    display: flex;
    align-items: center;
    padding-left: 3px;
  }

  .places h2 {
    color: #444;
  }

  .places a {
    color: inherit;
    text-decoration: none;
    gap: 3px;
  }

  .places a.active,
  .results .active {
    background: #adc6c8;
  }

  .swatch {
    width: 4px;
    height: 4px;
    margin: 0 2px;
  }

  .row-icon {
    width: 8px;
    height: 7px;
    flex: none;
    fill: none;
    stroke: #222;
    stroke-width: 0.9;
  }

  .content {
    flex: 1;
    min-width: 0;
    display: flex;
    flex-direction: column;
  }

  .filter-head {
    height: 11px;
    display: flex;
    align-items: center;
    gap: 2px;
    padding: 0 2px;
    border-bottom: 1px solid #6c6c6c;
  }

  .filter-head .outline {
    margin-left: auto;
    width: 22px;
  }

  .filter-head .outline svg {
    width: 4px;
  }

  .filter {
    padding: 2px 3px 1px;
    border-bottom: 1px solid #6c6c6c;
    display: flex;
    flex-direction: column;
    gap: 1px;
  }

  .filter h3 {
    line-height: 8px;
  }

  .filter h3 span {
    font-size: 4px;
  }

  .tag-row {
    display: flex;
    gap: 3px;
  }

  .tag {
    padding: 0 1px;
    line-height: 8px;
    height: 8px;
    color: #606060;
  }

  .tag.on {
    background: #b9b9b9;
    color: #1c1c1c;
  }

  .tag.hot {
    background: #f8b83c;
    color: #1c1c1c;
  }

  .results-head {
    height: 11px;
    background: #fbdc7e;
    display: flex;
    align-items: center;
    gap: 4px;
    padding: 0 2px;
  }

  .results-head .pill {
    margin-left: auto;
    width: 24px;
    background: #e3dcc8;
  }

  .name-head {
    height: 9px;
    background: #bcbcbc;
    display: flex;
    justify-content: space-between;
    align-items: center;
    padding: 0 4px 0 2px;
  }

  .name-head svg {
    width: 8px;
    height: 6px;
  }

  .results {
    flex: 1;
    display: flex;
    flex-direction: column;
    border-bottom: 1px solid #6c6c6c;
  }

  .results li {
    flex: 1;
    display: flex;
    align-items: center;
    gap: 3px;
    padding-left: 10px;
  }

  .preview {
    height: 11px;
    display: flex;
    align-items: center;
    gap: 3px;
    padding: 0 2px;
  }

  .preview-wave {
    flex: 1;
    height: 10px;
  }

  .preview .outline {
    width: 16px;
  }

  /* arrangement */
  .stage {
    flex: 1;
    min-width: 0;
    display: flex;
    flex-direction: column;
    gap: 1px;
  }

  .arrangement {
    display: flex;
    background: #a7a7a7;
    border-radius: 2px 2px 0 0;
  }

  .timeline {
    flex: 1;
    min-width: 0;
    position: relative;
    overflow: hidden;
  }

  .grid-shade {
    position: absolute;
    left: 0;
    top: 10px;
    width: 100%;
    height: 188px;
  }

  .ruler {
    position: relative;
    height: 23px;
    border-bottom: 1px solid #6c6c6c;
  }

  .tick {
    position: absolute;
    top: 5px;
    height: 5px;
    line-height: 4px;
    padding-left: 2px;
    border-left: 1px solid #777;
    color: #333;
  }

  .loop {
    position: absolute;
    top: 10px;
    height: 5px;
    background: #cacaca;
    box-shadow: inset 0 0 0 1px #777;
    display: flex;
    justify-content: space-between;
  }

  .loop svg {
    width: 4px;
    height: 5px;
    fill: #ddd;
    stroke: #222;
    stroke-width: 0.7;
  }

  .lane,
  .head-row {
    position: relative;
    border-bottom: 1px solid #6f6f6f;
  }

  .drums { height: 14px; }
  .small { height: 11px; }
  .bus { height: 20px; }
  .tall { height: 49px; }
  .audio { height: 26px; }

  .lane.tall {
    background: rgba(255, 255, 255, 0.25);
  }

  .clip {
    position: absolute;
    top: 0;
    bottom: 0;
    border-right: 1px solid rgba(0, 0, 0, 0.2);
  }

  .clip svg {
    width: 100%;
    height: 100%;
  }

  .clip-name {
    position: absolute;
    left: 2px;
    top: 0;
  }

  .ghost {
    position: absolute;
    height: 2px;
    background: #8b8b8b;
  }

  .hit {
    position: absolute;
    width: 4px;
    height: 2px;
    background: #174b43;
  }

  .zoom-ratio {
    position: absolute;
    right: 2px;
    top: 1px;
    font-size: 9px;
    color: #555;
  }

  .marker {
    position: absolute;
    top: 15px;
    bottom: 13px;
    width: 1px;
    background: #555;
  }

  .playhead {
    top: 23px;
    background: #111;
  }

  .time-ruler {
    position: relative;
    height: 13px;
  }

  .time-ruler .tick {
    top: 0;
    height: 6px;
    line-height: 9px;
  }

  .track-heads {
    width: 72px;
    flex: none;
    border-left: 1px solid #777;
  }

  .head-tools {
    height: 23px;
    padding: 2px 18px 1px 1px;
    border-bottom: 1px solid #6c6c6c;
    display: flex;
    flex-wrap: wrap;
    justify-content: space-between;
    align-content: space-between;
  }

  .head-tools .pill {
    width: 17px;
  }

  .tool-pair {
    display: flex;
    gap: 2px;
  }

  .tool-pair .outline {
    width: 13px;
  }

  .locators {
    display: flex;
    gap: 2px;
    width: 100%;
  }

  .head-row {
    display: flex;
  }

  .head {
    width: 58px;
    padding: 1px 2px;
    display: flex;
    align-items: flex-start;
    gap: 4px;
    line-height: 8px;
  }

  .head.nested {
    border-left: 3px solid #f4a67a;
    box-shadow: inset 1px 0 #9e6c50;
    gap: 3px;
  }

  .head-meter {
    width: 7px;
    padding: 0 1px;
    margin-left: 1px;
    background: linear-gradient(#b6b34c, #66e058 45%);
    background-clip: content-box;
  }

  .head-meter i {
    display: block;
    background: #2c2c2c;
  }

  .head-foot {
    height: 13px;
    display: flex;
    align-items: center;
    gap: 2px;
    padding-right: 13px;
  }

  .head-foot .outline {
    background: #b4b4b4;
    border-color: #666;
    width: 9px;
    padding: 0;
  }

  .head-foot .rate {
    width: 20px;
    border-color: #333;
  }

  .head-foot .push {
    margin-left: auto;
  }

  /* mixer */
  .mixer {
    flex: 1;
    display: flex;
    background: #555;
  }

  .strips {
    flex: 1;
    min-width: 0;
    display: flex;
    overflow: hidden;
  }

  .strip {
    width: 53px;
    flex: none;
    display: flex;
    flex-direction: column;
    background: #a5a5a5;
    border-right: 1px solid #666;
  }

  .strips .strip:first-child {
    margin-left: -14px;
  }

  .strip.main {
    width: 56px;
    border-left: 1px solid #444;
    border-right: 0;
  }

  .strip.selected {
    background: #bcbcbc;
  }

  .strip-name {
    height: 13px;
    padding: 3px 1px 1px 2px;
    display: flex;
    justify-content: space-between;
    align-items: center;
    border-bottom: 1px solid #666;
  }

  .strip-name.nested {
    box-shadow: inset 0 2px #b77c5b;
  }

  .strip-body {
    flex: 1;
    display: flex;
    padding: 3px 0 0 5px;
  }

  .strip-controls {
    width: 19px;
    display: flex;
    flex-direction: column;
    align-items: center;
  }

  .peak {
    width: 19px;
    height: 6px;
    line-height: 6px;
    margin: 1px 0 4px;
    border-radius: 3px;
    background: #cfcfcf;
    box-shadow: 0 0 0 1px #777;
  }

  .box {
    width: 100%;
    height: 7px;
    line-height: 7px;
    background: #d8d8d8;
    box-shadow: inset 0 0 0 1px #888;
  }

  .pan {
    margin: 33px 0 2px;
  }

  .knob {
    fill: none;
    stroke-width: 1.8;
    overflow: visible;
    flex: none;
  }

  .pan-knob,
  .k-mid {
    width: 17px;
    height: 17px;
  }

  .k-send {
    width: 15px;
    height: 15px;
  }

  .cue {
    width: 17px;
    height: 17px;
    margin-top: 2px;
  }

  .number {
    width: 13px;
    height: 13px;
    font-size: 8px;
    font-weight: 600;
    background: #f8b83c;
    border: 1px solid #6e5a30;
    line-height: 11px;
    margin-bottom: 3px;
  }

  .small-btn {
    width: 13px;
    height: 7px;
    line-height: 7px;
    background: #c9c9c9;
    box-shadow: 0 0 0 1px #777;
    margin-bottom: 3px;
    display: flex;
    justify-content: center;
    align-items: center;
  }

  .small-btn svg {
    width: 6px;
    height: 6px;
  }

  .solo {
    margin-top: 5px;
  }

  .meter {
    width: 26px;
    height: 104px;
    flex: none;
  }

  .meter text {
    font-size: 5px;
    fill: #444;
  }

  .strip-foot {
    height: 3px;
    box-shadow: 0 -1px #666;
  }

  /* devices */
  .devices {
    position: relative;
    display: flex;
    padding: 5px 3px 6px 4px;
  }

  .device {
    min-height: 104px;
    display: flex;
    flex-direction: column;
    background: #adadad;
    border-radius: 2px;
    overflow: hidden;
  }

  .device header {
    height: 10px;
    display: flex;
    align-items: center;
    gap: 2px;
    padding: 0 2px;
    background: #c0c0c0;
  }

  .device-icons {
    display: flex;
    gap: 1px;
    margin-left: auto;
  }

  .power {
    width: 7px;
    height: 7px;
    flex: none;
    border-radius: 50%;
    background: #f8b83c;
    border: 1px solid #8d702f;
  }

  .device-body {
    flex: 1;
    display: flex;
  }

  .scale-device {
    width: 137px;
    flex: none;
  }

  .scale-device b {
    padding-left: 2px;
  }

  .scale-grid {
    width: 84px;
    height: 90px;
    margin: 2px 2px 2px 3px;
  }

  .scale-params {
    flex: 1;
    padding: 1px 2px 2px 0;
    display: flex;
    flex-direction: column;
    align-items: center;
  }

  .scale-params .dropdown {
    width: 100%;
    height: 7px;
    line-height: 7px;
    margin-top: 3px;
    border: 1px solid #777;
    color: #777;
  }

  .scale-params .dropdown select {
    line-height: 5px;
  }

  .mid {
    line-height: 7px;
    margin-top: 3px;
  }

  .scale-params .k-mid + .mid {
    margin-top: 0;
  }

  .pair {
    width: 100%;
    display: grid;
    grid-template-columns: 18px 1fr;
  }

  .pair.ends {
    grid-template-columns: 21px 24px;
    gap: 1px;
  }

  .fold {
    width: 23px;
    height: 7px;
    line-height: 6px;
    margin: 3px 0;
    color: #777;
    background: #c0c0c0;
    box-shadow: 0 0 0 1px #888;
  }

  .cyan {
    background: #5bc8d8;
  }

  .chain-meter {
    width: 3px;
    flex: none;
    margin: 22px 1px 20px;
    background: repeating-linear-gradient(#a08c50 0 2px, #777 2px 3px);
  }

  .chain-meter.green {
    width: 4px;
    background: linear-gradient(#333 20%, #6de067 20%);
  }

  .drift {
    flex: 1;
    min-width: 0;
  }

  .tab {
    height: 7px;
    line-height: 7px;
    padding: 0 4px;
    background: #acacac;
    display: flex;
    align-items: center;
    gap: 3px;
  }

  .tab i,
  .on-square {
    width: 4px;
    height: 4px;
    flex: none;
    background: #f8b83c;
  }

  .tab.dark {
    height: 9px;
    align-self: flex-end;
    background: #242424;
    color: #d8d8d8;
  }

  .osc-tab {
    margin-left: 14px;
  }

  .mod-tab {
    margin-left: auto;
  }

  .drift .device-icons {
    margin-left: 52px;
  }

  .sub-col {
    width: 35px;
    flex: none;
    padding: 3px 3px 3px;
    display: flex;
    flex-direction: column;
    line-height: 8px;
  }

  .sub-col > .amber,
  .voice-col .amber {
    height: 7px;
    line-height: 7px;
    margin-bottom: 1px;
    box-shadow: 0 0 0 1px #8d702f;
  }

  .knob-line {
    display: flex;
    align-items: flex-end;
    margin-bottom: 1px;
  }

  .knob-line span {
    margin-left: -3px;
    line-height: 6px;
  }

  .k-small {
    width: 12px;
    height: 12px;
  }

  .octaves {
    display: flex;
    gap: 1px;
    margin-bottom: 3px;
  }

  .octaves button {
    flex: 1;
    height: 7px;
    line-height: 7px;
    background: #cfcfcf;
    box-shadow: inset 0 0 0 1px #888;
  }

  .octaves .amber {
    background: #f8b83c;
  }

  .ruled {
    border-top: 1px solid #888;
    margin: 0 -2px 0 -1px;
    padding: 1px 0 0 1px;
  }

  .osc {
    width: 168px;
    flex: none;
    background: #242424;
    color: #a8a8a8;
    padding: 1px 3px;
    display: flex;
    flex-direction: column;
    margin-bottom: 1px;
  }

  .gold select,
  .gold-text,
  .gold,
  .osc-foot em,
  .ir-display em {
    color: #e9b03c;
  }

  .osc-row {
    display: flex;
    align-items: center;
    height: 9px;
  }

  .osc-row .dropdown {
    width: 36px;
  }

  .osc-row .ruled-left {
    width: 62px;
    margin-left: 2px;
    border-left: 1px solid #555;
  }

  .arrows {
    margin-left: auto;
  }

  .view-icons {
    width: 16px;
    height: 8px;
  }

  .osc-main {
    flex: 1;
    display: flex;
  }

  .osc-gain,
  .osc-pos {
    width: 22px;
    display: flex;
    flex-direction: column;
    align-items: center;
    justify-content: space-between;
  }

  .osc-gain svg {
    width: 16px;
    height: 52px;
  }

  .osc-pos svg {
    width: 10px;
    height: 60px;
  }

  .wavetable {
    flex: 1;
    min-width: 0;
    height: 64px;
    margin: 3px 4px 0 7px;
  }

  .osc-foot {
    height: 10px;
    display: flex;
    align-items: center;
    justify-content: space-between;
  }

  .osc-foot .dropdown {
    width: 24px;
  }

  .filters {
    width: 131px;
    flex: none;
    padding: 0 1px;
    display: flex;
    flex-direction: column;
  }

  .filter-display {
    background: #242424;
    color: #999;
    display: flex;
    flex-direction: column;
  }

  .filter-row {
    height: 11px;
    display: flex;
    align-items: center;
    gap: 2px;
    padding: 0 1px 0 3px;
  }

  .filter-row .dropdown {
    width: 24px;
    flex: none;
  }

  .filter-row .dropdown::after {
    right: 0;
  }

  .second {
    margin-left: auto;
  }

  .shape {
    width: 14px;
    height: 6px;
    flex: none;
  }

  .chip {
    background: #f8b83c;
    color: #222;
    line-height: 6px;
    width: 8px;
    flex: none;
    text-align: center;
  }

  .chip.blue {
    background: #69dbe8;
  }

  .response {
    width: 100%;
    height: 32px;
  }

  .serial {
    height: 9px;
    display: flex;
    align-items: center;
    gap: 3px;
    padding-left: 4px;
    border-top: 1px solid #3a3a3a;
  }

  .serial .dropdown {
    width: 28px;
  }

  .link-icon {
    width: 9px;
    height: 6px;
    fill: none;
    stroke: #888;
    stroke-width: 0.8;
  }

  .filter-knobs {
    flex: 1;
    display: flex;
    padding: 1px 4px 3px;
  }

  .fk {
    flex: 1;
    display: flex;
    flex-direction: column;
    align-items: center;
    line-height: 7px;
  }

  .fk.split {
    border-left: 1px solid #888;
  }

  .fk.side {
    flex: none;
    width: 22px;
    align-items: flex-start;
  }

  .fk .low {
    margin-left: 7px;
    margin-top: -4px;
  }

  .k-big {
    width: 24px;
    height: 24px;
    stroke-width: 1.4;
  }

  .mod {
    flex: 1;
    min-width: 0;
    margin-bottom: 1px;
    background: #242424;
    color: #b0b0b0;
    display: flex;
    flex-direction: column;
  }

  .mod-tabs {
    height: 11px;
    display: grid;
    grid-template-columns: repeat(5, 1fr);
    border-bottom: 1px solid #444;
  }

  .mod-tabs .current {
    color: #69dbe8;
    font-weight: 600;
    border-bottom: 1px solid #69dbe8;
    height: 11px;
  }

  .mod-graph {
    position: relative;
    flex: 1;
    display: flex;
    flex-direction: column;
    padding-top: 3px;
  }

  .mod-graph > svg {
    width: 100%;
    height: 0;
    flex: 1;
  }

  .mod-none {
    position: absolute;
    right: 3px;
    top: 1px;
    width: 26px;
  }

  .aqua {
    width: 100%;
    color: #69dbe8;
  }

  .mod-mode {
    display: flex;
    justify-content: center;
    gap: 3px;
    line-height: 8px;
  }

  .mod-mode b {
    color: #eee;
    border-bottom: 1px solid #ccc;
  }

  .adsr {
    border-top: 1px solid #555;
    padding: 1px 40px 2px 34px;
    display: grid;
    grid-template-columns: repeat(4, 1fr);
    text-align: center;
    line-height: 7px;
  }

  .adsr em {
    display: block;
    color: #69dbe8;
  }

  .voice-col {
    width: 36px;
    flex: none;
    padding: 1px 3px 3px 3px;
    display: flex;
    flex-direction: column;
  }

  .voice-col .amber {
    margin: 4px 12px 0 0;
  }

  .grow {
    flex: 1;
  }

  .dim {
    background: #adadad;
  }

  .voices {
    background: linear-gradient(90deg, #69dbe8 16%, #d8d8d8 16%);
  }

  .amount {
    background: linear-gradient(90deg, #69dbe8 40%, #d8d8d8 40%);
  }

  .boxed {
    height: 7px;
    background: #cfcfcf;
    box-shadow: inset 0 0 0 1px #888;
    line-height: 7px;
  }

  .cave {
    width: 98px;
    flex: none;
    margin-left: 1px;
  }

  .send-col {
    width: 33px;
    flex: none;
    padding: 1px 3px 3px 2px;
    display: flex;
    flex-direction: column;
    align-items: center;
    line-height: 7px;
  }

  .send-col .octaves {
    width: 100%;
    margin: 2px 0;
  }

  .send-col .k-send + span {
    margin-bottom: 2px;
  }

  .ir-col {
    flex: 1;
    min-width: 0;
    display: flex;
    flex-direction: column;
    gap: 2px;
    padding-bottom: 3px;
  }

  .ir-display {
    flex: 1;
    background: #242424;
    color: #b8b8b8;
  }

  .ir-display svg {
    width: 100%;
    height: 42px;
  }

  .ir-row {
    display: grid;
    grid-template-columns: 4px 1fr 1fr;
    align-items: center;
    gap: 3px;
    padding: 0 4px;
    text-align: center;
  }

  .ir-title {
    margin: 1px 2px;
  }

  /* watermark */
  .watermark {
    position: absolute;
    right: 12px;
    top: 14px;
    width: 206px;
    pointer-events: none;
  }

  .watermark svg {
    width: 56px;
    height: 60px;
    margin-left: 71px;
  }

  .wordmark {
    display: grid;
    grid-template-columns: 116px 1fr;
    margin-top: 13px;
    font-size: 33px;
    font-weight: 600;
    line-height: 24px;
    color: #14232f;
  }

  .wordmark .blue {
    color: #0a6df5;
  }

  /* status bar */
  .statusbar {
    height: 10px;
    display: flex;
    align-items: center;
    padding: 0 5px;
  }

  .info {
    width: 9px;
    height: 9px;
    line-height: 9px;
    border-radius: 50%;
    background: #a0a0a0;
    color: #666;
    text-align: center;
    margin-right: 9px;
  }

  .status-box {
    flex: 1;
    height: 10px;
    background: #a0a0a0;
    border-radius: 2px;
    margin-right: 6px;
  }

  .mini {
    width: 10px;
    height: 10px;
    background-color: #a5a5a5;
  }

  .mini.amber {
    background-color: #f8b83c;
  }

  .mini svg {
    width: 8px;
    height: 8px;
    margin: 0 auto;
  }

  .overview {
    width: 111px;
    height: 10px;
    margin: 0 6px 0 1px;
  }

  .statusbar b {
    font-weight: 500;
    margin: 0 4px;
  }

  .thumbs {
    width: 100px;
    height: 10px;
  }

  .bars {
    width: 18px;
    height: 9px;
    margin-left: 9px;
  }
</style>
